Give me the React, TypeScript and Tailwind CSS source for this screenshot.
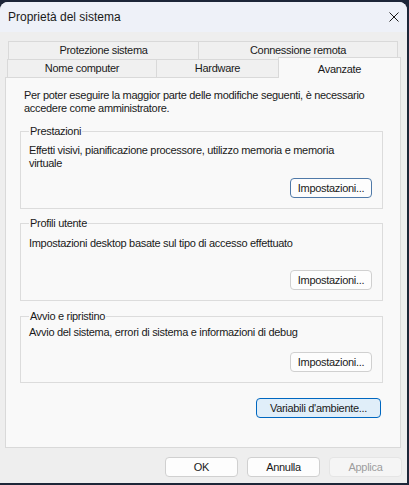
import { useState } from 'react';

const tabsBack = ['Protezione sistema', 'Connessione remota'];

function WinButton({
  label,
  className = '',
  variant = 'normal',
}: {
  label: string;
  className?: string;
  variant?: 'normal' | 'focus' | 'hover' | 'disabled';
}) {
  const styles = {
    normal: 'bg-[#fdfdfd] border-[#d0d0d0] text-[#1a1a1a]',
    focus: 'bg-[#fdfdfd] border-[#4f79a8] text-[#1a1a1a]',
    hover: 'bg-[#e0eef9] border-[#0067c0] text-[#1a1a1a]',
    disabled: 'bg-[#f5f5f5] border-[#e5e5e5] text-[#9d9d9d]',
  }[variant];
  return (
    <button
      type="button"
      className={`flex items-center justify-center h-[20px] rounded-[4px] border leading-[13px] ${styles} ${className}`}
    >
      {label}
    </button>
  );
}

function GroupBox({
  title,
  text,
  textTop,
  buttonTop,
  className = '',
}: {
  title: string;
  text: string;
  textTop: string;
  buttonTop: string;
  className?: string;
}) {
  return (
    <fieldset className={`mx-[14px] w-[363px] border border-[#dcdcdc] px-[8px] pb-[10px] ${className}`}>
      <legend className="px-[1px] leading-[13px] text-[#1a1a1a]">{title}</legend>
      <p className={`leading-[13px] whitespace-pre-line ${textTop}`}>{text}</p>
      <div className={`flex justify-end ${buttonTop}`}>
        <WinButton label="Impostazioni..." className="w-[82px] mr-[2px]" variant={title === 'Prestazioni' ? 'focus' : 'normal'} />
      </div>
    </fieldset>
  );
}

export default function App() {
  const [active] = useState('Avanzate');

  return (
    <div className="w-[409px] h-[485px] bg-[#1d2638] pt-[2px] overflow-hidden font-['Liberation_Sans',Arial,sans-serif] text-[#1a1a1a]">
      <div className="w-[407px] h-[481px] rounded-t-[8px] overflow-hidden bg-[#eeeeee] flex flex-col">
        {/* Title bar */}
        <div className="h-[30px] bg-[#eef1f8] flex items-center justify-between pl-[8px] pr-[8px] shrink-0 text-[12px]">
          <span className="leading-[14px]">Proprietà del sistema</span>
          <svg width="10" height="10" viewBox="0 0 10 10">
            <path d="M0.5 0.5 L9.5 9.5 M9.5 0.5 L0.5 9.5" stroke="#1a1a1a" strokeWidth="1" />
          </svg>
        </div>

        <div className="text-[11px] tracking-[-0.3px] flex flex-col">
          {/* Tabs */}
          <div className="pt-[9px]">
            <div className="flex ml-[8px] h-[18px]">
              {tabsBack.map((t, i) => (
                <div
                  key={t}
                  className={`flex items-center justify-center border border-b-0 border-[#d9d9d9] bg-[#f0f0f0] ${
                    i === 0 ? 'w-[191px]' : 'w-[199px] border-l-0'
                  }`}
                >
                  {t}
                </div>
              ))}
            </div>
            <div className="flex items-end ml-[7px] h-[18px]">
              <div className="w-[150px] h-[18px] flex items-center justify-center border border-b-0 border-[#d9d9d9] bg-[#f0f0f0]">
                Nome computer
              </div>
              <div className="w-[122px] h-[18px] flex items-center justify-center border border-b-0 border-l-0 border-[#d9d9d9] bg-[#f0f0f0]">
                Hardware
              </div>
              <div
                className={`relative z-10 -ml-[1px] -mb-[1px] w-[123px] h-[21px] flex items-start justify-center pt-[3px] border border-b-0 border-[#d9d9d9] ${
                  active === 'Avanzate' ? 'bg-[#f9f9f9]' : 'bg-[#f0f0f0]'
                }`}
              >
                Avanzate
              </div>
            </div>
          </div>

          {/* Panel */}
          <div className="mx-[5px] w-[396px] h-[371px] border border-[#d9d9d9] bg-[#f9f9f9] flex flex-col">
            <p className="pl-[18px] pt-[11px] leading-[13px]">
              Per poter eseguire la maggior parte delle modifiche seguenti, è necessario
              <br />
              accedere come amministratore.
            </p>

            <GroupBox
              className="mt-[10px]"
              title="Prestazioni"
              text={'Effetti visivi, pianificazione processore, utilizzo memoria e memoria\nvirtuale'}
              textTop="mt-[6px]"
              buttonTop="mt-[8px]"
            />
            <GroupBox
              className="mt-[8px]"
              title="Profili utente"
              text="Impostazioni desktop basate sul tipo di accesso effettuato"
              textTop="mt-[7px]"
              buttonTop="mt-[20px]"
            />
            <GroupBox
              className="mt-[9px]"
              title="Avvio e ripristino"
              text="Avvio del sistema, errori di sistema e informazioni di debug"
              textTop="mt-[3px]"
              buttonTop="mt-[13px]"
            />

            <div className="flex justify-end mr-[19px] mt-[15px]">
              <WinButton label="Variabili d'ambiente..." className="w-[125px]" variant="hover" />
            </div>
          </div>

          {/* Dialog buttons */}
          <div className="flex justify-end gap-[9px] pr-[5px] mt-[9px]">
            <WinButton label="OK" className="w-[73px]" />
            <WinButton label="Annulla" className="w-[73px]" />
            <WinButton label="Applica" className="w-[73px]" variant="disabled" />
          </div>
        </div>
      </div>
    </div>
  );
}
